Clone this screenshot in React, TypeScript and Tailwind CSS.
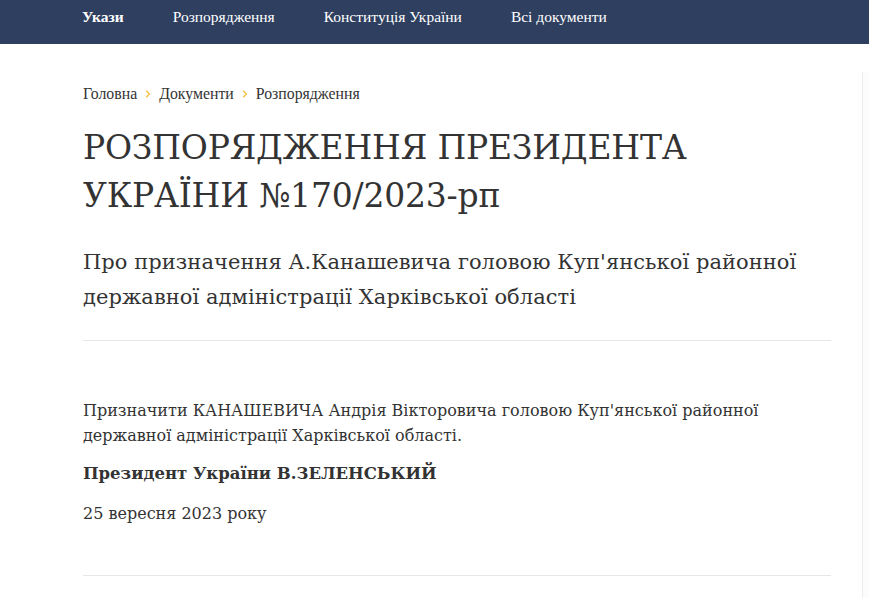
const navItems = [
  { label: "Укази", active: true },
  { label: "Розпорядження", active: false },
  { label: "Конституція України", active: false },
  { label: "Всі документи", active: false },
];

const crumbs = ["Головна", "Документи", "Розпорядження"];

const Chevron = () => (
  <svg width="6" height="10" viewBox="0 0 6 10" className="mx-[8px]">
    <path d="M1.2 1.8 L4.4 5 L1.2 8.2" fill="none" stroke="#f5c242" strokeWidth="1.4" />
  </svg>
);

export default function App() {
  return (
    <div className="min-h-[598px] bg-white font-['Liberation_Serif',serif] text-[#333]">
      {/* Top nav */}
      <header className="h-[44px] bg-[#2f3f5f]">
        <nav className="flex h-[34px] items-center gap-[49px] pl-[82px] text-[15.5px] text-white">
          {navItems.map((item) => (
            <a key={item.label} href="#" className={item.active ? "font-bold" : ""}>
              {item.label}
            </a>
          ))}
        </nav>
      </header>

      <div className="flex pt-[28px]">
        <main className="ml-[83px] w-[748px] pt-[12px]">
          {/* Breadcrumbs */}
          <div className="flex h-[20px] items-center text-[15.8px] text-[#333]">
            {crumbs.map((c, i) => (
              <span key={c} className="flex items-center">
                {i > 0 && <Chevron />}
                {c}
              </span>
            ))}
          </div>

          <div className="font-['DejaVu_Serif',serif]">
            <h1 className="mt-[20px] text-[33px] leading-[48px] tracking-[-0.2px] text-[#333]">
              РОЗПОРЯДЖЕННЯ ПРЕЗИДЕНТА
              <br />
              УКРАЇНИ №170/2023-рп
            </h1>

            <h2 className="mt-[25px] text-[21px] leading-[35px] tracking-[0.05px] text-[#333]">
              Про призначення А.Канашевича головою Куп'янської районної державної адміністрації Харківської області
            </h2>

            <hr className="mt-[25px] border-t border-[#e6e6e6]" />

            <div className="mt-[57px] text-[16px] leading-[25px] text-[#333]">
              <p>
                Призначити КАНАШЕВИЧА Андрія Вікторовича головою Куп'янської районної державної адміністрації
                Харківської області.
              </p>
              <p className="mt-[13px] text-[16.5px] font-bold">Президент України В.ЗЕЛЕНСЬКИЙ</p>
              <p className="mt-[15px]">25 вересня 2023 року</p>
            </div>

            <hr className="mt-[49px] border-t border-[#e6e6e6]" />
          </div>
        </main>

        <aside className="ml-[31px] min-h-[526px] flex-1 border-l border-[#ececec] bg-[#fcfcfc]" />
      </div>
    </div>
  );
}
